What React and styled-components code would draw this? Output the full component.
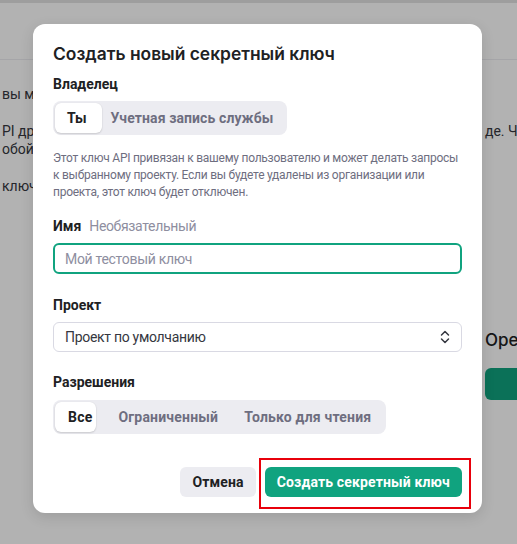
import React from 'react';
import styled, { createGlobalStyle } from 'styled-components';

const Global = createGlobalStyle`
  html, body { margin: 0; padding: 0; }
  body { font-family: Roboto, "Liberation Sans", Arial, sans-serif; background: #fff; overflow: hidden; }
  * { box-sizing: border-box; }
`;

const Page = styled.div`
  width: 517px;
  height: 544px;
  position: relative;
  overflow: hidden;
  background: #fff;
  color: #353740;
`;

const Header = styled.header`
  height: 60px;
  border-top: 3px solid #e2e2e2;
  border-bottom: 1px solid #ececf1;
`;

const Content = styled.main`
  display: grid;
  grid-template-columns: 482px 1fr;
  padding-top: 25px;
`;

const LeftCol = styled.div`
  padding-left: 2px;
  overflow: hidden;
  display: flex;
  flex-direction: column;
  gap: 19px;
`;

const RightCol = styled.div`
  padding-left: 3px;
  display: flex;
  flex-direction: column;
  overflow: hidden;
`;

const BgText = styled.p`
  margin: 0;
  font-size: 14px;
  line-height: 18px;
  white-space: nowrap;
  color: #353740;
  margin-top: ${p => p.$mt || 0}px;
`;

const BgHeading = styled.div`
  margin-top: 190px;
  font-family: Inter, sans-serif;
  font-weight: 500;
  font-size: 17px;
  line-height: 20px;
  white-space: nowrap;
  color: #202123;
`;

const BgButton = styled.div`
  margin-top: 18px;
  width: 60px;
  height: 32px;
  border-radius: 6px;
  background: #10a37f;
`;

const Overlay = styled.div`
  position: absolute;
  inset: 0;
  background: rgba(0, 0, 0, 0.3);
`;

const Modal = styled.div`
  position: absolute;
  left: 33px;
  top: 24px;
  width: 449px;
  background: #fff;
  border-radius: 12px;
  padding: 18px 20px 16px;
  box-shadow: 0 4px 14px rgba(0, 0, 0, 0.12);
  display: flex;
  flex-direction: column;
`;

const Title = styled.h2`
  margin: 0;
  font-family: Inter, sans-serif;
  font-weight: 600;
  font-size: 17.4px;
  line-height: 24px;
  color: #202123;
`;

const Label = styled.div`
  margin-top: ${p => p.$mt}px;
  font-weight: 700;
  font-size: 14px;
  line-height: 20px;
  color: #202123;
  display: flex;
  gap: 8px;
`;

const Optional = styled.span`
  font-weight: 400;
  letter-spacing: -0.35px;
  color: #8e8ea0;
`;

const Segmented = styled.div`
  margin-top: ${p => p.$mt}px;
  align-self: flex-start;
  position: relative;
  display: flex;
  padding: 2px;
  border-radius: 8px;
  background: #ececf1;
`;

const Indicator = styled.div`
  position: absolute;
  top: 2px;
  bottom: 2px;
  border-radius: 6px;
  background: #fff;
  box-shadow: 0 1px 2px rgba(0, 0, 0, 0.14), 0 0 1px rgba(0, 0, 0, 0.1);
`;

const SegItem = styled.div`
  position: relative;
  height: 30px;
  padding: 0 ${p => p.$pad}px;
  display: flex;
  align-items: center;
  font-weight: 700;
  font-size: 14px;
  letter-spacing: ${p => p.$ls}px;
  color: ${p => (p.$active ? '#202123' : '#6e6e80')};
`;

const Desc = styled.p`
  margin: 15px 0 0;
  font-size: 12px;
  line-height: 17px;
  letter-spacing: -0.25px;
  color: #6e6e80;
`;

const Input = styled.input`
  margin-top: 7px;
  width: 100%;
  height: 31px;
  border: 2px solid #10a37f;
  border-radius: 6px;
  padding: 0 10px;
  font-family: Roboto, "Liberation Sans", Arial, sans-serif;
  font-size: 14px;
  letter-spacing: -0.3px;
  color: #353740;
  outline: none;
  caret-color: #202123;
  &::placeholder { color: #8e8ea0; }
`;

const Select = styled.div`
  margin-top: 7px;
  height: 30px;
  border: 1px solid #d9d9e3;
  border-radius: 6px;
  padding: 0 11px;
  display: flex;
  align-items: center;
  justify-content: space-between;
  font-size: 14px;
  letter-spacing: -0.3px;
  color: #353740;
`;

const Footer = styled.div`
  margin-top: 33px;
  display: flex;
  justify-content: flex-end;
  gap: 9px;
`;

const Button = styled.button`
  height: 30px;
  padding: 0 12px;
  border: none;
  border-radius: 6px;
  font-family: Roboto, "Liberation Sans", Arial, sans-serif;
  font-weight: 700;
  font-size: 14px;
  letter-spacing: 0.15px;
  background: ${p => (p.$primary ? '#10a37f' : '#ececf1')};
  color: ${p => (p.$primary ? '#fff' : '#202123')};
  cursor: pointer;
`;

const Highlight = styled.span`
  position: relative;
  display: inline-flex;
`;

const RedBox = styled.span`
  position: absolute;
  left: -6px;
  right: -9px;
  top: -9px;
  bottom: -12px;
  border: 2px solid #e8000b;
  pointer-events: none;
`;

const Chevrons = () => (
  <svg width="10" height="14" viewBox="0 0 10 14" fill="none" stroke="#353740" strokeWidth="1.5" strokeLinecap="round" strokeLinejoin="round">
    <path d="M1.5 5 L5 1.5 L8.5 5" />
    <path d="M1.5 9 L5 12.5 L8.5 9" />
  </svg>
);

const owners = ['Ты', 'Учетная запись службы'];
const perms = ['Все', 'Ограниченный', 'Только для чтения'];

export default function App() {
  return (
    <Page>
      <Global />
      <Header />
      <Content>
        <LeftCol>
          <BgText>вы можете управлять ключами API этого проекта</BgText>
          <BgText>
            PI другим пользователям и не раскрывайте его в браузере
            <br />
            обой некоторые ключи могут быть отключены
          </BgText>
          <BgText>ключи отслеживания использования API</BgText>
        </LeftCol>
        <RightCol>
          <BgText $mt={37}>де. Чтобы</BgText>
          <BgHeading>OpenAI</BgHeading>
          <BgButton />
        </RightCol>
      </Content>
      <Overlay />
      <Modal>
        <Title>Создать новый секретный ключ</Title>
        <Label $mt={8}>Владелец</Label>
        <Segmented $mt={7}>
          <Indicator style={{ left: 2, width: 47 }} />
          {owners.map((o, i) => (
            <SegItem key={o} $active={i === 0} $pad={12} $ls={0.1}>{o}</SegItem>
          ))}
        </Segmented>
        <Desc>
          Этот ключ API привязан к вашему пользователю и может делать запросы
          к выбранному проекту. Если вы будете удалены из организации или
          проекта, этот ключ будет отключен.
        </Desc>
        <Label $mt={15}>
          Имя <Optional>Необязательный</Optional>
        </Label>
        <Input placeholder="Мой тестовый ключ" autoFocus />
        <Label $mt={21}>Проект</Label>
        <Select>
          <span>Проект по умолчанию</span>
          <Chevrons />
        </Select>
        <Label $mt={20}>Разрешения</Label>
        <Segmented $mt={8}>
          <Indicator style={{ left: 2, width: 41 }} />
          {perms.map((p, i) => (
            <SegItem key={p} $active={i === 0} $pad={13} $ls={0.2}>{p}</SegItem>
          ))}
        </Segmented>
        <Footer>
          <Button>Отмена</Button>
          <Highlight>
            <Button $primary>Создать секретный ключ</Button>
            <RedBox />
          </Highlight>
        </Footer>
      </Modal>
    </Page>
  );
}
